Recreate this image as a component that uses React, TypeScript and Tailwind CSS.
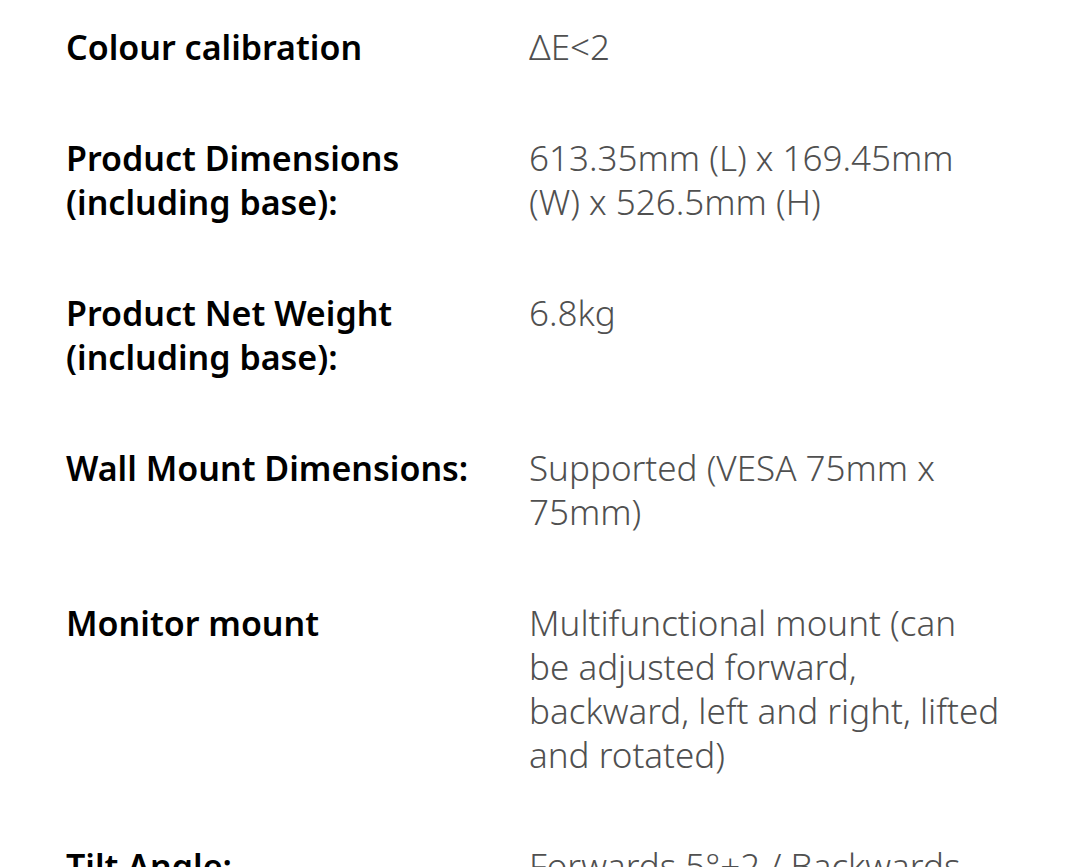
const specs: { label: string[]; value: string[] }[] = [
  { label: ["Colour calibration"], value: ["ΔE<2"] },
  {
    label: ["Product Dimensions", "(including base):"],
    value: ["613.35mm (L) x 169.45mm", "(W) x 526.5mm (H)"],
  },
  { label: ["Product Net Weight", "(including base):"], value: ["6.8kg"] },
  { label: ["Wall Mount Dimensions:"], value: ["Supported (VESA 75mm x", "75mm)"] },
  {
    label: ["Monitor mount"],
    value: [
      "Multifunctional mount (can",
      "be adjusted forward,",
      "backward, left and right, lifted",
      "and rotated)",
    ],
  },
  { label: ["Tilt Angle:"], value: ["Forwards 5°±2 / Backwards", "15°±2"] },
];

export default function App() {
  return (
    <div className="h-[867px] overflow-hidden bg-white font-['Noto_Sans',sans-serif]">
      <div className="flex flex-col gap-[67px] pl-[66px] pt-[25px]">
        {specs.map((spec) => (
          <div key={spec.label.join(" ")} className="flex leading-[44px]">
            <div className="w-[463px] shrink-0 text-[34px] font-semibold text-black">
              {spec.label.map((line) => (
                <div key={line} className="whitespace-nowrap">{line}</div>
              ))}
            </div>
            <div className="text-[35px] font-light text-[#505050]">
              {spec.value.map((line) => (
                <div key={line} className="whitespace-nowrap">{line}</div>
              ))}
            </div>
          </div>
        ))}
      </div>
    </div>
  );
}
